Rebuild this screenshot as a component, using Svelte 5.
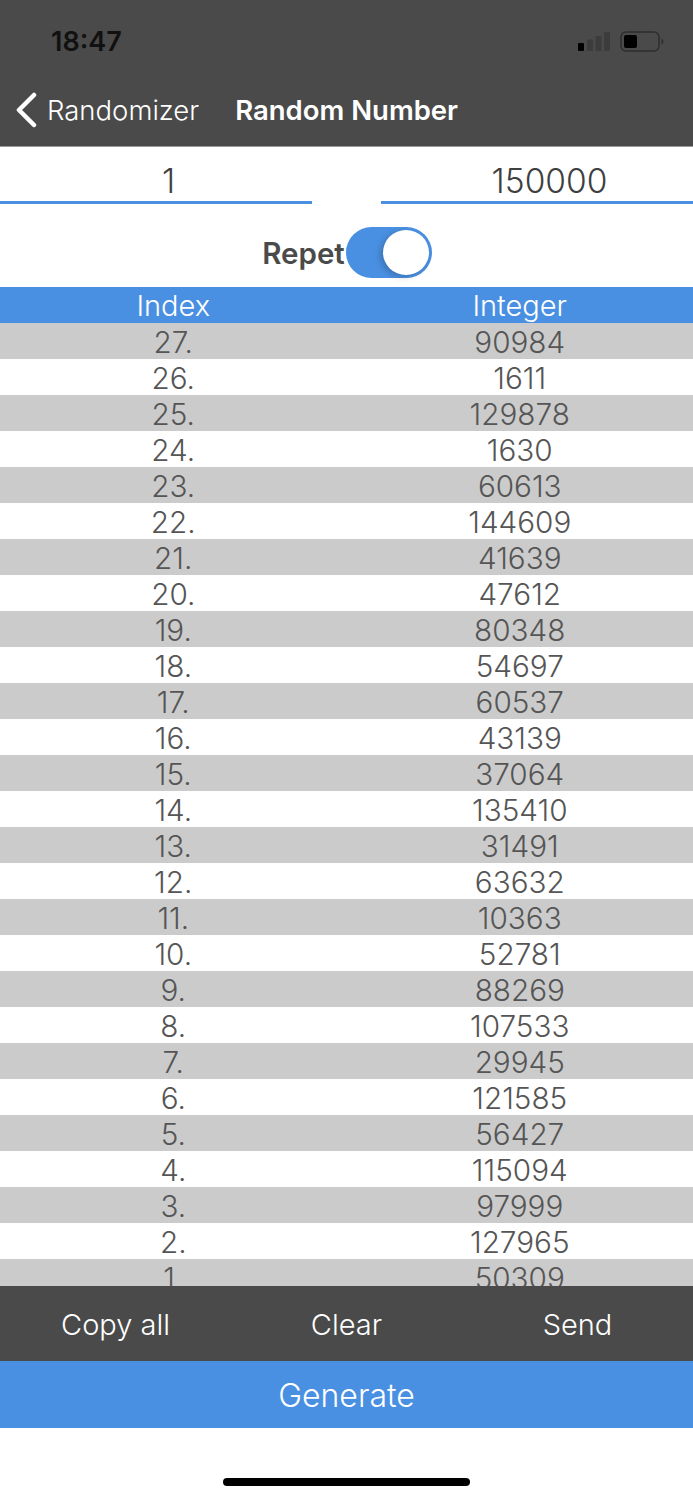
<script>
  const numbers = [
    90984, 1611, 129878, 1630, 60613, 144609, 41639, 47612, 80348,
    54697, 60537, 43139, 37064, 135410, 31491, 63632, 10363, 52781,
    88269, 107533, 29945, 121585, 56427, 115094, 97999, 127965, 50309
  ];

  let repeat = $state(true);
</script>

<main class="screen">
  <header class="top">
    <div class="status">
      <span class="time">18:47</span>
      <div class="status-icons">
        <svg class="signal" width="32" height="19" viewBox="0 0 32 19">
          <rect x="0" y="11" width="6" height="8" rx="1" fill="#000" />
          <rect x="9" y="7.500" width="6" height="11.500" rx="1" fill="#3c3c3c" />
          <rect x="17.500" y="4" width="6" height="15" rx="1" fill="#3c3c3c" />
          <rect x="26" y="0" width="6" height="19" rx="1" fill="#3c3c3c" />
        </svg>
        <svg class="battery" width="44" height="21" viewBox="0 0 44 21">
          <rect x="1" y="1" width="38" height="19" rx="5" fill="none" stroke="#2e2e2e" stroke-width="1.500" />
          <rect x="4" y="4" width="13" height="13" rx="2" fill="#000" />
          <path d="M41.500 7.500 C43 8.500 43.500 9.500 43.500 10.500 C43.500 11.500 43 12.500 41.500 13.500 Z" fill="#2e2e2e" />
        </svg>
      </div>
    </div>
    <nav class="nav">
      <button class="back">
        <svg width="22" height="36" viewBox="0 0 22 36">
          <path d="M19 3 L4 18 L19 33" fill="none" stroke="#fff" stroke-width="4.500" stroke-linecap="round" stroke-linejoin="round" />
        </svg>
        <span>Randomizer</span>
      </button>
      <h1>Random Number</h1>
    </nav>
  </header>

  <section class="range">
    <div class="field">1</div>
    <div class="field">150000</div>
  </section>

  <section class="repeat">
    <span>Repet</span>
    <button class="toggle" class:on={repeat} aria-label="Repet" onclick={() => (repeat = !repeat)}>
      <span class="knob"></span>
    </button>
  </section>

  <div class="thead">
    <div>Index</div>
    <div>Integer</div>
  </div>

  <div class="list">
    {#each numbers as value, i}
      <div class="row" class:grey={i % 2 === 0}>
        <div>{numbers.length - i}.</div>
        <div>{value}</div>
      </div>
    {/each}
  </div>

  <div class="actions">
    <button>Copy all</button>
    <button>Clear</button>
    <button>Send</button>
  </div>

  <button class="generate">Generate</button>

  <div class="home-area">
    <div class="home-bar"></div>
  </div>
</main>

<style>
  :global(body) {
    margin: 0;
    background: #fff;
  }

  .screen {
    display: flex;
    flex-direction: column;
    width: 693px;
    height: 1500px;
    overflow: hidden;
    font-family: Inter, "Noto Sans", sans-serif;
    color: #4a4a4a;
  }

  button {
    border: none;
    background: none;
    padding: 0;
    font: inherit;
    color: inherit;
  }

  .top {
    height: 147px;
    flex: none;
    background: #4a4a4a;
    color: #fff;
    border-bottom: 1px solid #9a9a9a;
    box-sizing: border-box;
  }

  .status {
    display: flex;
    justify-content: space-between;
    align-items: center;
    height: 83px;
    padding: 0 29px 0 51px;
  }

  .time {
    font-size: 27px;
    font-weight: 600;
    color: #111;
  }

  .status-icons {
    display: flex;
    align-items: center;
    gap: 10px;
  }

  .nav {
    display: flex;
    align-items: center;
    height: 54px;
    padding-left: 15px;
  }

  .back {
    display: flex;
    align-items: center;
    gap: 10px;
    color: #fff;
    font-size: 27.500px;
    font-weight: 300;
  }

  .nav h1 {
    margin: 0 0 0 36px;
    font-size: 27.500px;
    font-weight: 600;
  }

  .range {
    display: flex;
    justify-content: space-between;
    height: 57px;
    flex: none;
  }

  .field {
    width: 312px;
    height: 57px;
    box-sizing: border-box;
    padding-left: 25px;
    border-bottom: 3px solid #4a90e2;
    text-align: center;
    font-size: 33.500px;
    font-weight: 300;
    line-height: 68px;
    color: #3f3f3f;
  }

  .repeat {
    display: flex;
    align-items: center;
    justify-content: center;
    height: 83px;
    flex: none;
    padding: 23px 0 9px 1px;
    box-sizing: border-box;
    font-size: 29.500px;
    font-weight: 600;
  }

  .toggle {
    position: relative;
    width: 86px;
    height: 51px;
    margin-left: 1px;
    border-radius: 26px;
    background: #ccc;
  }

  .toggle.on {
    background: #4a90e2;
  }

  .knob {
    position: absolute;
    top: 3px;
    left: 3px;
    width: 46px;
    height: 45px;
    border-radius: 50%;
    background: #fff;
    box-shadow: -3px 2px 6px rgba(0, 0, 0, 0.2);
  }

  .toggle.on .knob {
    left: 37px;
  }

  .thead,
  .row {
    display: grid;
    grid-template-columns: 1fr 1fr;
    height: 36px;
    flex: none;
    text-align: center;
    font-size: 29.700px;
    font-weight: 300;
    line-height: 38px;
  }

  .thead {
    background: #4a90e2;
    color: #fff;
    font-size: 29px;
    line-height: 37px;
  }

  .list {
    flex: 1;
    min-height: 0;
    overflow: hidden;
  }

  .row {
    color: #555;
  }

  .row.grey {
    background: #cbcbcb;
  }

  .actions {
    display: grid;
    grid-template-columns: repeat(3, 1fr);
    height: 75px;
    flex: none;
    padding-top: 1px;
    box-sizing: border-box;
    background: #4a4a4a;
  }

  .actions button {
    color: #fff;
    font-size: 29px;
    font-weight: 300;
  }

  .generate {
    height: 67px;
    flex: none;
    padding-top: 2px;
    background: #4a90e2;
    color: #fff;
    font-size: 32px;
    font-weight: 300;
  }

  .home-area {
    display: flex;
    justify-content: center;
    align-items: flex-start;
    height: 72px;
    flex: none;
    padding-top: 50px;
    box-sizing: border-box;
  }

  .home-bar {
    width: 247px;
    height: 8px;
    border-radius: 4px;
    background: #000;
  }
</style>
